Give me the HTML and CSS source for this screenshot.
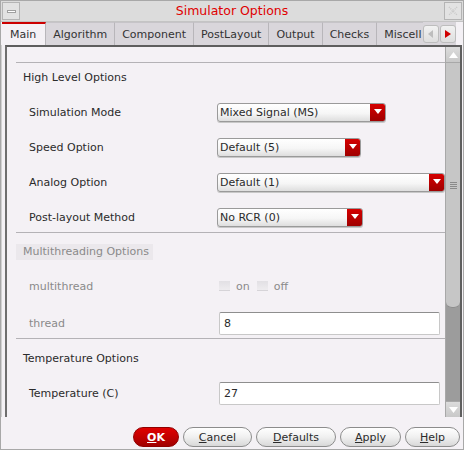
FILE: index.html
```html
<!DOCTYPE html>
<html>
<head>
<meta charset="utf-8">
<link rel="stylesheet" href="styles.css">
</head>
<body>
<div class="window">
  <div class="titlebar">
    <div class="tb-btn"><span class="min-glyph"></span></div>
    <div class="title">Simulator Options</div>
    <div class="tb-btn close">
      <svg width="10" height="10" viewBox="0 0 10 10"><path d="M1 1L9 9M9 1L1 9" stroke="#c8c8c8" stroke-width="1.5" stroke-dasharray="1 1"/></svg>
    </div>
  </div>
  <div class="tabs">
    <div class="tab active">Main</div>
    <div class="tab">Algorithm</div>
    <div class="tab">Component</div>
    <div class="tab">PostLayout</div>
    <div class="tab">Output</div>
    <div class="tab">Checks</div>
    <div class="tab last">Miscell</div>
    <div class="tab-scroll">
      <div class="ts-btn"><svg width="6" height="8" viewBox="0 0 6 8"><path d="M5 0L0 4L5 8Z" fill="#bdbdbd"/></svg></div>
      <div class="ts-btn"><svg width="6" height="8" viewBox="0 0 6 8"><path d="M0 0L6 4L0 8Z" fill="#d00000"/></svg></div>
    </div>
  </div>
  <div class="body">
    <div class="panel">
      <div class="content">
        <div class="top-gap"></div>
        <div class="sep"></div>
        <div class="header h1">High Level Options</div>
        <div class="rows r1">
          <div class="row">
            <div class="label">Simulation Mode</div>
            <div class="combo" style="width:169px"><span class="ctext">Mixed Signal (MS)</span><span class="carrow"><svg width="8" height="6" viewBox="0 0 8 6"><path d="M0 0H8L4 5Z" fill="#fff"/></svg></span></div>
          </div>
          <div class="row">
            <div class="label">Speed Option</div>
            <div class="combo" style="width:144px"><span class="ctext">Default (5)</span><span class="carrow"><svg width="8" height="6" viewBox="0 0 8 6"><path d="M0 0H8L4 5Z" fill="#fff"/></svg></span></div>
          </div>
          <div class="row">
            <div class="label">Analog Option</div>
            <div class="combo" style="width:228px"><span class="ctext">Default (1)</span><span class="carrow"><svg width="8" height="6" viewBox="0 0 8 6"><path d="M0 0H8L4 5Z" fill="#fff"/></svg></span></div>
          </div>
          <div class="row">
            <div class="label">Post-layout Method</div>
            <div class="combo" style="width:146px"><span class="ctext">No RCR (0)</span><span class="carrow"><svg width="8" height="6" viewBox="0 0 8 6"><path d="M0 0H8L4 5Z" fill="#fff"/></svg></span></div>
          </div>
        </div>
        <div class="sep s2"></div>
        <div class="header h2"><span class="dis-head">Multithreading Options</span></div>
        <div class="rows r2">
          <div class="row">
            <div class="label dis">multithread</div>
            <div class="checks">
              <span class="cb"></span><span class="cbl">on</span>
              <span class="cb"></span><span class="cbl">off</span>
            </div>
          </div>
          <div class="row">
            <div class="label dis">thread</div>
            <div class="input">8</div>
          </div>
        </div>
        <div class="sep s3"></div>
        <div class="header h3">Temperature Options</div>
        <div class="rows r3">
          <div class="row">
            <div class="label">Temperature (C)</div>
            <div class="input">27</div>
          </div>
          <div class="row">
            <div class="label"></div>
            <div class="input"></div>
          </div>
        </div>
      </div>
      <div class="scrollbar">
        <div class="sb-arrow"><svg width="9" height="6" viewBox="0 0 9 6"><path d="M0 6H9L4.5 0Z" fill="#fff"/></svg></div>
        <div class="sb-thumb"><span class="grip"></span></div>
        <div class="sb-track"></div>
        <div class="sb-arrow down"><svg width="9" height="6" viewBox="0 0 9 6"><path d="M0 0H9L4.5 6Z" fill="#fff"/></svg></div>
      </div>
    </div>
  </div>
  <div class="buttons">
    <div class="btn ok" style="width:46px"><u>O</u>K</div>
    <div class="btn" style="width:69px"><u>C</u>ancel</div>
    <div class="btn" style="width:80px"><u>D</u>efaults</div>
    <div class="btn" style="width:61px"><u>A</u>pply</div>
    <div class="btn" style="width:55px"><u>H</u>elp</div>
  </div>
</div>
</body>
</html>
```

FILE: styles.css
```css
* { box-sizing: border-box; }
html, body { margin: 0; padding: 0; background: #f4f1f5; }
body { font-family: "DejaVu Sans", sans-serif; font-size: 11px; color: #2b2b2b; }

.window {
  width: 464px;
  height: 450px;
  border: 1px solid #a8a8a8;
  background: #f4f1f5;
  display: flex;
  flex-direction: column;
  overflow: hidden;
}

.titlebar {
  height: 21px;
  background: #dcdcdc;
  display: flex;
  align-items: center;
  padding: 0 1px;
  border-bottom: 1px solid #c4c4c4;
}
.tb-btn {
  width: 18px;
  height: 18px;
  border: 1px solid #b4b4b4;
  background: #e2e2e2;
  display: flex;
  align-items: center;
  justify-content: center;
}
.min-glyph {
  width: 9px;
  height: 3px;
  border: 1px solid #a0a0a0;
  background: #fff;
}
.title {
  flex: 1;
  text-align: center;
  color: #e00000;
  font-size: 12.5px;
  line-height: 18px;
}

.tabs {
  height: 23px;
  display: flex;
  align-items: stretch;
  background: #f4f1f5;
  padding-left: 1px;
}
.tab {
  background: #d9d6db;
  border-top: 1px solid #c6c4c8;
  border-right: 1px solid #b8b6ba;
  padding: 0 7px;
  display: flex;
  align-items: center;
  color: #333;
  white-space: nowrap;
}
.tab.active {
  background: #f4f1f5;
  border-top: 2px solid #cc0000;
  padding: 0 9px 0 8px;
}
.tab.last {
  width: 46px;
  overflow: hidden;
  padding: 0 0 0 7px;
  border-right: none;
}
.tab-scroll {
  display: flex;
  gap: 1px;
  padding-top: 3px;
  padding-bottom: 1px;
  background: #d9d6db;
}
.ts-btn {
  width: 16px;
  height: 18px;
  border: 1px solid #bdbdbd;
  border-radius: 3px;
  background: linear-gradient(#f2f2f2, #dedede);
  display: flex;
  align-items: center;
  justify-content: center;
}

.body {
  height: 372px;
  padding-left: 3px;
  padding-right: 1px;
  background: #f4f1f5;
  border-left: 1px solid #d0d0d0;
}
.panel {
  height: 100%;
  border-left: 2px solid #6e6e6e;
  border-top: 2px solid #5e5e5e;
  border-right: 2px solid #5e5e5e;
  display: flex;
  overflow: hidden;
}
.content {
  flex: 1;
  padding-left: 9px;
  overflow: hidden;
}
.top-gap { height: 15px; }
.sep { height: 1px; background: #b4b2b6; }
.header {
  height: 26px;
  display: flex;
  align-items: center;
  padding-left: 7px;
  color: #2b2b2b;
}
.h1 { margin-top: 1px; }
.h2 { height: 16px; margin-top: 11px; padding-left: 0; }
.dis-head {
  background: #ebe8ec;
  color: #8a8a8a;
  padding: 1px 4px 1px 7px;
  line-height: 14px;
}
.h3 { margin-top: 6px; }

.rows { display: flex; flex-direction: column; gap: 11px; }
.r1 { margin-top: 10px; margin-bottom: 3px; }
.r2 { margin-top: 14px; gap: 13px; margin-bottom: 3px; }
.r3 { margin-top: 10px; }
.row {
  height: 24px;
  display: flex;
  align-items: center;
}
.label {
  width: 201px;
  padding-left: 13px;
  flex-shrink: 0;
}
.label.dis { color: #8a8a8a; }

.combo {
  height: 19px;
  display: flex;
  border: 1px solid #9a9a9a;
  border-radius: 3px;
  background: linear-gradient(#ffffff 0%, #f6f6f6 55%, #dedede 100%);
  overflow: hidden;
  box-shadow: 0 1px 0 #c8c8c8;
}
.ctext {
  flex: 1;
  padding-left: 2px;
  line-height: 17px;
  color: #2b2b2b;
}
.carrow {
  width: 16px;
  background: linear-gradient(#d80000, #b40000 60%, #9c0000);
  display: flex;
  align-items: center;
  justify-content: center;
  margin: -1px -1px -1px 0;
  border-radius: 0 3px 3px 0;
}

.checks {
  display: flex;
  align-items: center;
  padding-left: 2px;
  color: #8a8a8a;
}
.cb {
  width: 11px;
  height: 10px;
  background: linear-gradient(#e2e0e4, #eeecef);
  border-bottom: 1px solid #d6d4d8;
  margin-right: 6px;
}
.cbl { margin-right: 7px; }

.input {
  width: 221px;
  height: 23px;
  margin-left: 2px;
  background: #fff;
  border: 1px solid #c8c8c8;
  border-top-color: #8e8e8e;
  border-radius: 2px;
  padding-left: 4px;
  line-height: 21px;
  color: #2b2b2b;
}

.scrollbar {
  width: 15px;
  flex-shrink: 0;
  display: flex;
  flex-direction: column;
  border-left: 1px solid #a8a8a8;
  background: #9c9c9c;
}
.sb-arrow {
  height: 16px;
  background: linear-gradient(#dcdcdc, #c8c8c8);
  border-bottom: 1px solid #a8a8a8;
  display: flex;
  align-items: center;
  justify-content: center;
}
.sb-arrow.down { border-top: 1px solid #a8a8a8; border-bottom: none; }
.sb-thumb {
  height: 245px;
  background: #c6c6c6;
  border-bottom: 1px solid #8e8e8e;
  border-radius: 0 0 6px 6px;
  display: flex;
  align-items: center;
  justify-content: center;
}
.grip {
  width: 7px;
  height: 7px;
  background: repeating-linear-gradient(#8a8a8a 0 1px, transparent 1px 2px);
}
.sb-track { flex: 1; background: #9c9c9c; }

.buttons {
  flex: 1;
  display: flex;
  justify-content: flex-end;
  align-items: flex-start;
  gap: 4px;
  padding-top: 10px;
  padding-right: 3px;
  background: #f4f1f5;
}
.btn {
  height: 20px;
  border: 1px solid #8c8c8c;
  border-radius: 10px;
  background: linear-gradient(#ffffff, #f0f0f0 50%, #d8d8d8);
  display: flex;
  align-items: center;
  justify-content: center;
  color: #2b2b2b;
  font-size: 11px;
}
.btn u { text-decoration: underline; text-underline-offset: 1px; }
.btn.ok {
  background: linear-gradient(#e00000, #c00000 55%, #a00000);
  border-color: #900000;
  color: #fff;
  font-weight: bold;
}
```
